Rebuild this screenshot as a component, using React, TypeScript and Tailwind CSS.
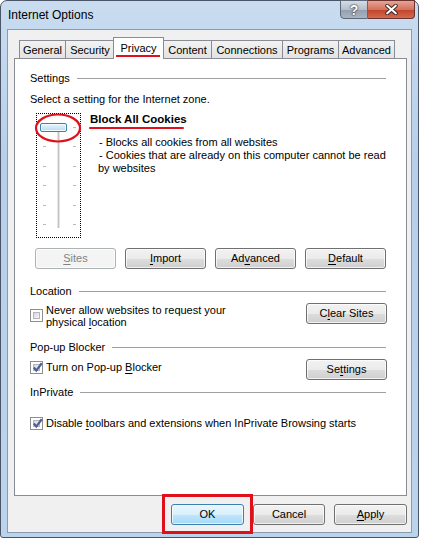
import React from "react"

const font = { fontFamily: '"Liberation Sans", Arial, sans-serif' }

const Btn = ({ children, w = "w-[81px]", primary = false, disabled = false }: { children: React.ReactNode; w?: string; primary?: boolean; disabled?: boolean }) => {
	const tone = disabled
		? "border-[#adb2b5] bg-[#f4f4f4] text-[#838383]"
		: primary
			? "border-[#3c7fb1] bg-[linear-gradient(#eaf6fd_0%,#d9f0fc_50%,#bee6fd_51%,#a7d9f5_100%)] text-black"
			: "border-[#707070] bg-[linear-gradient(#f2f2f2_0%,#ebebeb_50%,#dddddd_51%,#cfcfcf_100%)] text-black"
	return (
		<div className={`${w} h-[21px] shrink-0 rounded-[3px] border ${tone} flex items-center justify-center text-[11px] leading-none shadow-[inset_0_0_0_1px_rgba(255,255,255,0.7)]`}>
			{children}
		</div>
	)
}

const U = ({ children }: { children: React.ReactNode }) => <span className="underline underline-offset-[2px]">{children}</span>

const Check = ({ checked = false }: { checked?: boolean }) => (
	<div className="w-[13px] h-[13px] shrink-0 border border-[#8e8f8f] bg-white p-[2px]">
		<div className="w-full h-full relative bg-[linear-gradient(135deg,#d4d8dd,#f7f7f7)] border border-[#b4b8bd]">
			{checked && (
				<svg viewBox="0 0 9 9" className="absolute left-[-2px] top-[-3px] w-[11px] h-[11px]">
					<path d="M1.5 4.5 L3.5 7 L8 1" fill="none" stroke="#4a5f97" strokeWidth="1.8" />
				</svg>
			)}
		</div>
	</div>
)

const Group = ({ label, mt }: { label: string; mt: string }) => (
	<div className={`flex items-center gap-[7px] ${mt} h-[14px]`}>
		<span>{label}</span>
		<div className="flex-1 h-px bg-[#a0a0a0] mr-[6px]" />
	</div>
)

const tabs = [
	{ name: "General", w: "w-[46px]" },
	{ name: "Security", w: "w-[49px]" },
	{ name: "Privacy", w: "w-[51px]" },
	{ name: "Content", w: "w-[48px]" },
	{ name: "Connections", w: "w-[71px]" },
	{ name: "Programs", w: "w-[56px]" },
	{ name: "Advanced", w: "w-[57px]" },
]

export default function App() {
	return (
		<div className="w-[427px] h-[542px] bg-white text-black text-[11px] leading-[13px]" style={font}>
			<div className="w-[419px] h-[538px] rounded-t-[7px] rounded-b-[3px] border border-[#4a5667] bg-[linear-gradient(180deg,#c9dcf0_0%,#b7cfea_30%,#bcd3ec_100%)] flex flex-col">
				{/* title bar */}
				<div className="h-[28px] flex items-start justify-between shrink-0">
					<span className="pl-[7px] pt-[7px] text-[12px] leading-[15px]">Internet Options</span>
					<div className="flex mr-[3px] mt-[-1px]">
						<div className="w-[28px] h-[19px] rounded-bl-[4px] border border-[#5d6878] bg-[linear-gradient(#d6dce4_0%,#b5bec9_50%,#929eae_51%,#aab5c3_100%)] flex items-center justify-center">
							<span className="text-white font-bold text-[14px] leading-none [text-shadow:0_0_2px_#222,0_0_1px_#222]">?</span>
						</div>
						<div className="w-[47px] h-[19px] rounded-br-[4px] border border-l-0 border-[#6b3232] bg-[linear-gradient(#e8a493_0%,#d2735e_50%,#c0432b_51%,#d46a4d_100%)] flex items-center justify-center">
							<svg viewBox="0 0 14 10" className="w-[15px] h-[11px]">
								<path d="M3 1.5 L11 8.5 M11 1.5 L3 8.5" stroke="#3a2020" strokeWidth="3.6" strokeLinecap="round" />
								<path d="M3 1.5 L11 8.5 M11 1.5 L3 8.5" stroke="#fff" strokeWidth="2" strokeLinecap="round" />
							</svg>
						</div>
					</div>
				</div>
				{/* client area */}
				<div className="flex-1 mx-[6px] mb-[4px] border border-[#8a9ab0] bg-[#f0f0f0] flex flex-col pl-[6px] pr-[4px] pt-[7px]">
					<div className="flex items-end pl-[5px] h-[21px] relative">
						{tabs.map((t) =>
							t.name === "Privacy" ? (
								<div key={t.name} className={`${t.w} h-[22px] -mx-[1px] mb-[-1px] z-10 relative bg-white border border-b-0 border-[#898c95] flex items-start justify-center pt-[4px]`}>
									{t.name}
									<div className="absolute left-[2px] right-[3px] top-[17px] h-[2px] bg-[#e01020]" />
								</div>
							) : (
								<div key={t.name} className={`${t.w} h-[18px] pt-[1px] bg-[linear-gradient(#f2f2f2,#e3e3e3)] border border-b-0 border-r-0 last:border-r border-[#898c95] flex items-center justify-center`}>
									{t.name}
								</div>
							),
						)}
					</div>
					{/* tab panel */}
					<div className="h-[438px] bg-white border border-[#898c95] flex flex-col pl-[15px] pr-[14px]">
						<Group label="Settings" mt="mt-[12px]" />
						<div className="mt-[8px] h-[14px]">Select a setting for the Internet zone.</div>
						<div className="flex mt-[6px]">
							<div className="ml-[6px] w-[45px] h-[125px] border border-dotted border-black relative flex justify-center">
								<div className="w-[3px] mt-[12px] mb-[9px] bg-[#c4c4c4] border-x border-[#e4e4e4]" />
								<div className="absolute left-[6px] right-[4px] top-[13px] flex flex-col justify-between h-[98px]">
									{[0, 1, 2, 3, 4, 5].map((i) => (
										<div key={i} className="flex justify-between">
											<div className="w-[3px] h-px bg-[#b8b8b8]" />
											<div className="w-[3px] h-px bg-[#b8b8b8]" />
										</div>
									))}
								</div>
								<div className="absolute left-[3px] top-[9px] w-[27px] h-[9px] rounded-[2px] border border-[#3c7fb1] bg-[linear-gradient(#e6f6fd,#b0ddf5)] shadow-[inset_0_0_0_1px_#f4fbff]" />
								<svg className="absolute left-[-2px] top-[-1px] overflow-visible" width="48" height="32">
									<ellipse cx="23" cy="15" rx="22" ry="13.5" fill="none" stroke="#e0101a" strokeWidth="2.2" />
								</svg>
							</div>
							<div className="ml-[8px] flex flex-col">
								<div className="relative font-bold text-[11.5px] leading-[14px] mt-[-1px] pl-[1px]">
									Block All Cookies
									<div className="absolute left-[0px] w-[95px] top-[15px] h-[2px] bg-[#e0101a] rounded-full" />
								</div>
								<div className="pl-[10px] mt-[10px]">
									<div>- Blocks all cookies from all websites</div>
									<div>- Cookies that are already on this computer cannot be read</div>
								</div>
								<div className="pl-[9px]">by websites</div>
							</div>
						</div>
						<div className="flex gap-[9px] mt-[10px] ml-[5px]">
							<Btn disabled><U>S</U>ites</Btn>
							<Btn><U>I</U>mport</Btn>
							<Btn>Ad<U>v</U>anced</Btn>
							<Btn><U>D</U>efault</Btn>
						</div>
						<Group label="Location" mt="mt-[15px]" />
						<div className="flex items-start mt-[5px]">
							<div className="mt-[6px]"><Check /></div>
							<div className="ml-[3px] leading-[12px] flex-1 mt-[1px]">
								<div>Never allow websites to request your</div>
								<div>physical <U>l</U>ocation</div>
							</div>
							<div className="mr-[5px]"><Btn>C<U>l</U>ear Sites</Btn></div>
						</div>
						<Group label="Pop-up Blocker" mt="mt-[12px]" />
						<div className="flex items-start mt-[5px]">
							<div className="mt-[2px]"><Check checked /></div>
							<div className="ml-[3px] flex-1 mt-[2px]">Turn on Pop-up <U>B</U>locker</div>
							<div className="mr-[5px]"><Btn>Se<U>t</U>tings</Btn></div>
						</div>
						<Group label="InPrivate" mt="mt-[5px]" />
						<div className="flex items-center mt-[18px]">
							<Check checked />
							<div className="ml-[3px]">Disable <U>t</U>oolbars and extensions when InPrivate Browsing starts</div>
						</div>
					</div>
					{/* dialog buttons */}
					<div className="flex justify-end items-center gap-[9px] mt-[8px]">
						<div className="relative">
							<Btn primary w="w-[73px]">OK</Btn>
							<div className="absolute left-[-9px] right-[-9px] top-[-10px] bottom-[-9px] border-[3px] border-[#e0101a]" />
						</div>
						<Btn w="w-[72px]">Cancel</Btn>
						<Btn w="w-[73px]"><U>A</U>pply</Btn>
					</div>
				</div>
			</div>
		</div>
	)
}
